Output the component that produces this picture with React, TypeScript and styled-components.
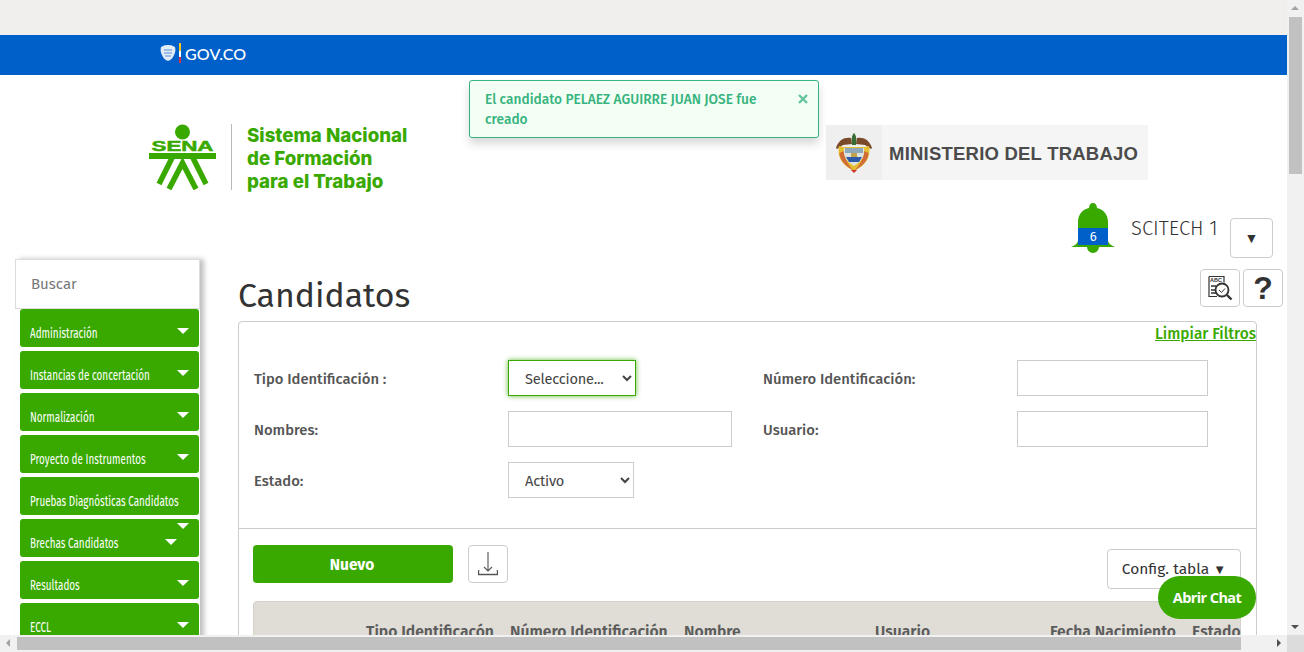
import React from "react";
import styled, { createGlobalStyle } from "styled-components";

const GREEN = "#39a900";
const BODY = '"Fira Sans", "Noto Sans", "Open Sans", sans-serif';

const Global = createGlobalStyle`
  html, body { margin: 0; padding: 0; height: 100%; overflow: hidden; background: #fff; }
  * { box-sizing: border-box; }
`;

const Window = styled.div`
  width: 1304px; height: 652px; display: grid;
  grid-template-columns: 1287px 17px; grid-template-rows: 635px 17px;
  font-family: ${BODY}; color: #333;
`;
const Viewport = styled.div`position: relative; overflow: hidden; background: #fff;`;
const TopStrip = styled.div`height: 35px; background: #f0efee;`;
const GovBar = styled.div`
  height: 40px; background: #0060c9; display: flex; align-items: center;
  padding: 0 0 4px 160px; gap: 3px; color: #fff;
  font: 500 16px "Lato", sans-serif; letter-spacing: 0.1px;
`;
const Header = styled.header`
  height: 125px; display: flex; align-items: flex-start; padding: 49px 0 0 149px;
`;
const Divider = styled.div`width: 1px; height: 66px; background: #b8b8b8; margin: 0 15px 0 15px;`;
const SenaTitle = styled.div`
  width: 200px; color: ${GREEN}; font: 800 18.7px/23px "Inter", sans-serif; letter-spacing: 0;
`;
const Ministry = styled.div`
  width: 322px; height: 55px; margin: 1px 0 0 379px; display: flex; align-items: center;
  background: #f5f5f5; color: #4b4b4b; padding-top: 2px;
  font: 700 18.5px "Liberation Sans", sans-serif; letter-spacing: 0.22px;
`;
const ShieldBox = styled.div`
  width: 56px; height: 55px; margin-top: -2px; background: #efefef; display: flex; align-items: center; justify-content: center;
  margin-right: 7px;
`;
const UserRow = styled.div`
  height: 58px; display: flex; align-items: flex-start; justify-content: flex-end; padding: 3px 14px 0 0;
`;
const Bell = styled.div`
  position: relative; width: 44px; height: 50px; margin-right: 16px;
`;
const BellCount = styled.span`
  position: absolute; left: 7px; top: 25px; width: 30px; height: 17px; background: #0060c9; color: #fff;
  font-size: 13px; line-height: 17px; text-align: center;
`;
const UserName = styled.span`font-size: 20.2px; line-height: 22px; margin: 14px 12.500px 0 0; color: #333; font-weight: 300;`;
const IconButton = styled.button<{ $w: number; $h: number }>`
  width: ${(p) => p.$w}px; height: ${(p) => p.$h}px; padding: 0; background: #fff;
  border: 1px solid #ccc; border-radius: 4px; color: #333;
  display: flex; align-items: center; justify-content: center; font-family: inherit;
`;
const DropButton = styled(IconButton)`margin-top: 15px; font-size: 14px;`;
const HelpButton = styled(IconButton)`font: 700 32px/36px "Liberation Sans", sans-serif;`;
const Main = styled.div`display: flex; align-items: flex-start; padding-left: 15px;`;
const Sidebar = styled.aside`
  width: 185px; height: 420px; flex: none; box-shadow: 4px 0 5px rgba(0,0,0,.25); margin-top: 1px;
`;
const SearchBox = styled.div`
  height: 50px; background: #fff; border: 1px solid #ddd; padding: 14px 15px;
  font-size: 15px; line-height: 20px; color: #777;
`;
const MenuList = styled.nav`display: flex; flex-direction: column; gap: 4px; padding: 0 1px 0 5px;`;
const MenuItem = styled.div`
  position: relative; height: 38px; flex: none; background: ${GREEN}; border-radius: 3px; color: #fff;
  padding: 14px 0 0 10px; white-space: nowrap; overflow: hidden;
`;
const MenuLabel = styled.span`
  display: inline-block; transform: scaleX(0.66); transform-origin: left center;
  font: 400 15px/18px "Fira Sans", "Noto Sans", sans-serif;
`;
const Caret = styled.span<{ $top: number; $right: number }>`
  position: absolute; top: ${(p) => p.$top}px; right: ${(p) => p.$right}px; width: 0; height: 0;
  border-left: 6px solid transparent; border-right: 6px solid transparent; border-top: 6px solid #fff;
`;
const Content = styled.main`position: relative; width: 1019px; margin-left: 38px; flex: none;`;
const Title = styled.h1`
  margin: 0; height: 63px; padding-top: 17px; font-size: 33.8px; line-height: 42px; font-weight: 400; color: #333;
`;
const Tools = styled.div`position: absolute; top: 11px; right: -26px; display: flex; gap: 3px;`;
const Panel = styled.section`
  border: 1px solid #ccc; border-radius: 4px 4px 0 0; height: 400px; background: #fff;
`;
const ClearLink = styled.a`
  display: block; text-align: right; color: ${GREEN}; text-decoration: underline; font-size: 15.45px; font-weight: 500;
  line-height: 22px; margin-top: 1px; 
`;
const FilterGrid = styled.div`
  display: grid; grid-template-columns: 254px 255px 254px 1fr; grid-auto-rows: 36px; row-gap: 15px;
  padding: 15px 0 30px 15px; align-items: center;
  border-bottom: 1px solid #ccc;
`;
const Label = styled.label`font-size: 14.8px; font-weight: 500; color: #555; padding-top: 2px;`;
const Field = styled.input<{ $w: number }>`
  width: ${(p) => p.$w}px; height: 36px; border: 1px solid #ccc; background: #fff; padding: 0 8px; outline: none;
  display: block;
`;
const Select = styled.select<{ $w: number; $focus?: boolean }>`
  width: ${(p) => p.$w}px; height: 36px; border: 1px solid ${(p) => (p.$focus ? GREEN : "#ccc")}; background: #fff;
  padding: 1px 0 0 12px; font: 400 14.6px ${BODY}; letter-spacing: -0.2px; color: #444; display: block;
  ${(p) => (p.$focus ? "box-shadow: 0 0 5px rgba(57,169,0,.8);" : "")}
`;
const Actions = styled.div`display: flex; align-items: flex-start; padding: 16px 15px 0 14px;`;
const NewButton = styled.button`
  width: 200px; height: 38px; background: ${GREEN}; border: 0; border-radius: 4px; color: #fff;
  font: 700 15.500px ${BODY}; margin-right: 15px; padding: 2px 2px 0 0;
`;
const ConfigButton = styled.button`
  width: 134px; height: 40px; margin: 4px 0 0 auto; background: #fff; border: 1px solid #ccc; border-radius: 4px;
  font: 400 15.500px ${BODY}; color: #333; padding: 0;
`;
const ConfigCaret = styled.span`font-size: 13px;`;
const TableHead = styled.div`
  margin: 12px 15px 0 14px; height: 60px; background: #e0ddd7; border: 1px solid #d4d1cb; border-radius: 4px 4px 0 0;
  display: grid; grid-template-columns: 112px 144px 174px 191px 175px 142px 1fr;
  padding-top: 20px; font-size: 15.7px; font-weight: 600; color: #5c5c5c; line-height: 20px; white-space: nowrap;
`;
const Toast = styled.div`
  position: absolute; left: 469px; top: 80px; width: 350px; height: 58px; background: #f3fff4;
  border: 1px solid #36b37e; border-radius: 3px; padding: 9px 40px 9px 15px; box-shadow: 0 6px 8px rgba(0,0,0,.15);
  font-size: 13.7px; line-height: 20px; font-weight: 500; color: #36b37e;
`;
const ToastClose = styled.svg`position: absolute; right: 10px; top: 13px;`;
const Chat = styled.button`
  position: absolute; left: 1158px; top: 576px; width: 98px; height: 43px; border: 0; border-radius: 22px;
  background: ${GREEN}; color: #fff; font: 700 14.500px "Open Sans", sans-serif; letter-spacing: -0.6px; padding: 0 0 1px;
`;
const ScrollV = styled.div`
  background: #f1f1f1; display: flex; flex-direction: column; align-items: center; position: relative;
`;
const ScrollThumbV = styled.div`width: 13px; height: 157px; margin-top: 17px; background: #c1c1c1;`;
const ScrollH = styled.div`background: #f1f1f1; display: flex; align-items: center; position: relative;`;
const ScrollThumbH = styled.div`width: 1224px; height: 13px; margin-left: 17px; background: #c1c1c1;`;
const ScrollCorner = styled.div`background: #dcdcdc;`;
const Arrow = styled.span<{ $dir: "up" | "down" | "left" | "right" }>`
  position: absolute; width: 0; height: 0; border: 4px solid transparent;
  ${(p) => p.$dir === "up" && "top: 2px; left: 4px; border-bottom-color: #a3a3a3;"}
  ${(p) => p.$dir === "down" && "top: 625px; left: 4px; border-top-color: #505050;"}
  ${(p) => p.$dir === "left" && "left: 2px; top: 4px; border-right-color: #a3a3a3;"}
  ${(p) => p.$dir === "right" && "left: 1277px; top: 4px; border-left-color: #505050;"}
`;

const SenaLogo = () => (
  <svg width="67" height="66" viewBox="0 0 67 66">
    <circle cx="33.500" cy="8" r="7.500" fill={GREEN} />
    <text x="33.500" y="27" textAnchor="middle" fontFamily="Liberation Sans" fontWeight="700" fontSize="14" textLength="62" lengthAdjust="spacingAndGlyphs" fill={GREEN} stroke={GREEN} strokeWidth="0.5">SENA</text>
    <rect x="0" y="29" width="67" height="6" fill={GREEN} />
    <g fill="none" stroke={GREEN} strokeWidth="5.500">
      <path d="M23 34L10 60" />
      <path d="M44 34l13 26" />
      <path d="M20 65l13.500-26L47 65" />
    </g>
  </svg>
);

const GovShield = () => (
  <svg width="16" height="18" viewBox="0 0 16 18">
    <path d="M1 3c2-1 3-2 7-2s5 1 7 2c1 4 0 6-1 8-1 3-3 5-6 6-3-1-5-3-6-6-1-2-2-4-1-8z" fill="#e3ecf6" />
    <path d="M4 6h8M4 9h8M5 12h6" stroke="#5d8fd0" strokeWidth="1.200" />
  </svg>
);

const Coat = () => (
  <svg width="38" height="40" viewBox="0 0 38 40">
    <path d="M1 15C4 6 10 4 16 5l1 6-9 1-6 4zM37 15C34 6 28 4 22 5l-1 6 9 1 6 4z" fill="#7a4a2a" />
    <path d="M19 0c2 2 3 6 2 12h-4c-1-6 0-10 2-12z" fill="#3a6b35" />
    <path d="M4 13c2 0 3 1 4 1h22c1 0 2-1 4-1 2 10-2 19-15 25C6 32 2 23 4 13z" fill="#e5bf2f" />
    <path d="M4.500 20c0 7 6 13 14.500 18-4-4-9-10-10-20zM33.500 20c0 7-6 13-14.500 18 4-4 9-10 10-20z" fill="#c9483a" opacity=".7" />
    <path d="M9 15h20c1 8-2 13-10 18-8-5-11-10-10-18z" fill="#dfe3de" />
    <path d="M10 15h18v5H10z" fill="#8fa7bb" />
    <path d="M11 24h16l-3 5H14z" fill="#2f5aa8" />
    <path d="M16 20h6v4h-6z" fill="#c2a24a" />
    <path d="M16 37h6l-3 3z" fill="#c9352b" />
  </svg>
);

const BellIcon = () => (
  <svg width="44" height="50" viewBox="0 0 44 50">
    <path d="M22 0c2.500 0 4 2 4 5c7 1.500 11 7 11 14v19c1 3 3 4 7 6H28c0 3-3 6-6 6s-6-3-6-6H0c4-2 6-3 7-6V19c0-7 4-12.500 11-14C18 2 19.500 0 22 0z" fill={GREEN} />
  </svg>
);

const ReviewIcon = () => (
  <svg width="26" height="26" viewBox="0 0 26 26" fill="none" stroke="#333">
    <path d="M2 1.500h15v6M2 1.500v20h8" strokeWidth="1.200" />
    <path d="M4 15h5M4 18h5M4 11h5" strokeWidth="1.400" />
    <text x="3" y="7" fontSize="5.500" fontWeight="700" fontFamily="Liberation Sans" fill="#333" stroke="none">ABC</text>
    <circle cx="15" cy="15" r="6.500" strokeWidth="1.800" />
    <path d="M12 15l2.500 2.500 3.500-4" strokeWidth="1" />
    <path d="M20 20l4.500 4.500" strokeWidth="2.400" />
  </svg>
);

const DownloadIcon = () => (
  <svg width="20" height="24" viewBox="0 0 20 24" fill="none" stroke="#555" strokeWidth="1.100">
    <path d="M10 0v19M6 15l4 4 4-4" />
    <path d="M.5 18v4.500h19V18" strokeWidth="1.400" />
  </svg>
);

const items: string[] = [
  "Administración",
  "Instancias de concertación",
  "Normalización",
  "Proyecto de Instrumentos",
  "Pruebas Diagnósticas Candidatos",
  "Brechas Candidatos",
  "Resultados",
  "ECCL",
];

export default function App() {
  return (
    <Window>
      <Global />
      <Viewport>
        <TopStrip />
        <GovBar>
          <GovShield />
          <svg width="3" height="20" viewBox="0 0 3 20"><path d="M0 0h2v8H0z" fill="#f5c518" /><path d="M0 8h2v6H0z" fill="#fff" /><path d="M0 14h2v6H0z" fill="#d9304a" /></svg>
          <span>GOV.CO</span>
        </GovBar>
        <Header>
          <SenaLogo />
          <Divider />
          <SenaTitle>Sistema Nacional<br />de Formación<br />para el Trabajo</SenaTitle>
          <Ministry>
            <ShieldBox><Coat /></ShieldBox>
            MINISTERIO DEL TRABAJO
          </Ministry>
        </Header>
        <UserRow>
          <Bell><BellIcon /><BellCount>6</BellCount></Bell>
          <UserName>SCITECH 1</UserName>
          <DropButton $w={43} $h={40}>▼</DropButton>
        </UserRow>
        <Main>
          <Sidebar>
            <SearchBox>Buscar</SearchBox>
            <MenuList>
              {items.map((label) => (
                <MenuItem key={label}>
                  <MenuLabel>{label}</MenuLabel>
                  {label === "Brechas Candidatos" ? <><Caret $top={4} $right={10} /><Caret $top={20} $right={22} /></> : null}
                  {label !== "Brechas Candidatos" && label !== "Pruebas Diagnósticas Candidatos" ? <Caret $top={19} $right={10} /> : null}
                </MenuItem>
              ))}
            </MenuList>
          </Sidebar>
          <Content>
            <Title>Candidatos</Title>
            <Tools>
              <IconButton $w={40} $h={38}><ReviewIcon /></IconButton>
              <HelpButton $w={40} $h={38}>?</HelpButton>
            </Tools>
            <Panel>
              <ClearLink>Limpiar Filtros</ClearLink>
              <FilterGrid>
                <Label>Tipo Identificación :</Label>
                <div><Select $w={128} $focus defaultValue="s"><option value="s">Seleccione...</option></Select></div>
                <Label>Número Identificación:</Label>
                <div><Field $w={191} /></div>
                <Label>Nombres:</Label>
                <div><Field $w={224} /></div>
                <Label>Usuario:</Label>
                <div><Field $w={191} /></div>
                <Label>Estado:</Label>
                <div><Select $w={126} defaultValue="a"><option value="a">Activo</option></Select></div>
              </FilterGrid>
              <Actions>
                <NewButton>Nuevo</NewButton>
                <IconButton $w={40} $h={38}><DownloadIcon /></IconButton>
                <ConfigButton>Config. tabla <ConfigCaret>▼</ConfigCaret></ConfigButton>
              </Actions>
              <TableHead>
                <span />
                <span>Tipo Identificacón</span>
                <span>Número Identificación</span>
                <span>Nombre</span>
                <span>Usuario</span>
                <span>Fecha Nacimiento</span>
                <span>Estado</span>
              </TableHead>
            </Panel>
          </Content>
        </Main>
        <Toast>
          El candidato PELAEZ AGUIRRE JUAN JOSE fue creado
          <ToastClose width="10" height="10" viewBox="0 0 10 10"><path d="M1 1l8 8M9 1L1 9" stroke="#62c49b" strokeWidth="2.400" /></ToastClose>
        </Toast>
        <Chat>Abrir Chat</Chat>
      </Viewport>
      <ScrollV><Arrow $dir="up" /><ScrollThumbV /><Arrow $dir="down" /></ScrollV>
      <ScrollH><Arrow $dir="left" /><ScrollThumbH /><Arrow $dir="right" /></ScrollH>
      <ScrollCorner />
    </Window>
  );
}
